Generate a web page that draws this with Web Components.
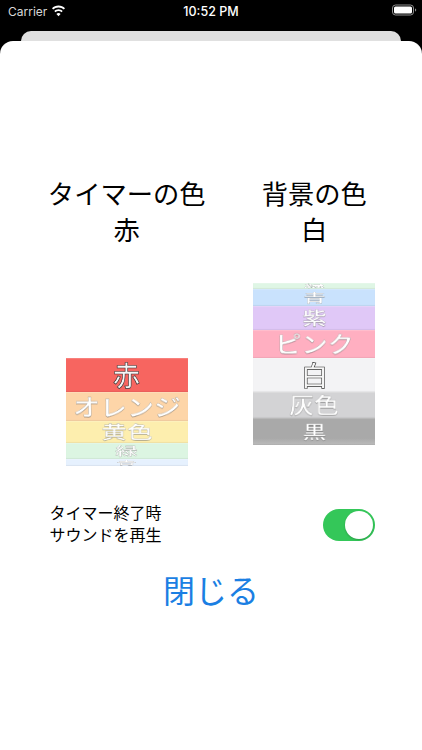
<!DOCTYPE html>
<html lang="ja">
<head>
<meta charset="utf-8">
<title>timer settings</title>
<style>
    html, body { margin: 0; height: 100%; background: #000; }
    body { font-family: "Noto Sans CJK JP", "Liberation Sans", sans-serif; overflow: hidden; }
</style>
</head>
<body>

<template id="status-bar-tpl">
    <style>
        :host { display: flex; align-items: center; height: 22px; padding: 0 5px 0 8px; color: #fff; font: 12.5px "Inter", "Liberation Sans", sans-serif; }
        .left { display: flex; align-items: center; gap: 4px; flex: 1; color: #d8d8d8; font-size: 12px; }
        .time { flex: 1; text-align: center; font-weight: 500; margin-right: 3px; }
        .right { flex: 1; display: flex; justify-content: flex-end; }
        svg { display: block; }
        .right svg { margin-bottom: 2px; }
    </style>
    <div class="left">
        <span>Carrier</span>
        <svg width="15" height="12" viewBox="0 0 15 12"><path fill="#fff" d="M7.500 2.400c2 0 3.900.8 5.300 2.100l1.200-1.200C12.300 1.600 10 .6 7.500.6S2.700 1.600 1 3.300l1.200 1.200C3.600 3.200 5.500 2.400 7.500 2.400zM7.500 6c1.100 0 2.200.4 3 1.200l1.200-1.200C10.600 4.900 9.100 4.200 7.500 4.200S4.400 4.900 3.300 6l1.200 1.200c.8-.8 1.900-1.200 3-1.200zM7.500 11.200l2.100-2.300c-.5-.6-1.300-.9-2.100-.9s-1.600.3-2.100.9z"/></svg>
    </div>
    <div class="time">10:52 PM</div>
    <div class="right">
        <svg width="25" height="12" viewBox="0 0 25 12"><rect x=".5" y="1" width="21" height="10" rx="3" fill="none" stroke="#8e8e8e"/><rect x="2" y="2.500" width="18" height="7" rx="1.500" fill="#fff"/><path d="M23 4.500c.8.200 1.200.8 1.200 1.500s-.4 1.300-1.200 1.500z" fill="#8e8e8e"/></svg>
    </div>
</template>

<template id="sheet-stack-tpl">
    <style>
        :host { display: block; margin-top: 9px; }
        .back { height: 20px; margin: 0 21px -10px; background: #e0e0e0; border-radius: 10px 10px 0 0; }
        .front { height: 709px; background: #fff; border-radius: 13px 13px 0 0; box-sizing: border-box; padding-top: 134px; }
    </style>
    <div class="back"></div>
    <div class="front"><slot></slot></div>
</template>

<template id="color-column-tpl">
    <style>
        :host { display: flex; flex-direction: column; align-items: center; width: 188px; color: #000; }
        .title { font-size: 26.3px; line-height: 36px; text-align: center; white-space: nowrap; }
        .pick { width: 122px; height: 183px; margin-top: 36px; display: flex; flex-direction: column; }
    </style>
    <div class="title"><slot name="title"></slot></div>
    <div class="title"><slot name="value"></slot></div>
    <div class="pick"><div id="gap"></div><slot></slot></div>
</template>

<template id="color-row-tpl">
    <style>
        :host { display: flex; align-items: center; justify-content: center; flex: none; overflow: hidden; width: 122px; color: #fff; font: 500 27px/1.1 "Liberation Sans", "Noto Sans CJK JP", sans-serif; white-space: nowrap; box-shadow: inset 0 1px 1px rgba(255,255,255,.2), inset 0 -1px 1px rgba(0,0,0,.06); }
        span { display: block; will-change: transform; -webkit-text-stroke: .3px rgba(110,110,110,.6); text-shadow: 0 .5px .5px rgba(90,90,90,.35); }
        :host([picked]) span { color: #f6f6f6; -webkit-text-stroke: .6px rgba(40,40,40,.95); text-shadow: none; }
    </style>
    <span id="txt"><slot></slot></span>
</template>

<template id="sound-toggle-tpl">
    <style>
        :host { display: flex; align-items: center; justify-content: space-between; margin: 35px 47px 0 49.5px; color: #000; font-size: 16px; line-height: 22px; }
        .label { margin-bottom: 4px; }
        .track { position: relative; width: 52px; height: 32px; border-radius: 16px; background: #34c759; }
        .knob { position: absolute; top: 2px; right: 2px; width: 28px; height: 28px; border-radius: 50%; background: #fff; box-shadow: 0 1px 2px rgba(0,0,0,.2); }
    </style>
    <div class="label"><slot></slot></div>
    <div class="track"><div class="knob"></div></div>
</template>

<template id="close-button-tpl">
    <style>
        :host { display: block; margin-top: 18px; text-align: center; color: #1b7fe3; font-size: 32px; line-height: 44px; }
    </style>
    <slot></slot>
</template>

<script>
    (function() {
        // Most elements here only clone their template.
        function plain(name, tplId) {
            class Plain extends HTMLElement {
                constructor() {
                    super();
                    const root = this.attachShadow({mode: 'open'});
                    root.appendChild(document.getElementById(tplId).content.cloneNode(true));
                }
            }
            customElements.define(name, Plain);
        }

        plain('status-bar', 'status-bar-tpl');
        plain('sheet-stack', 'sheet-stack-tpl');
        plain('sound-toggle', 'sound-toggle-tpl');
        plain('close-button', 'close-button-tpl');

        class ColorColumn extends HTMLElement {
            constructor() {
                super();
                const root = this.attachShadow({mode: 'open'});
                root.appendChild(document.getElementById('color-column-tpl').content.cloneNode(true));
            }
            connectedCallback() {
                this.shadowRoot.getElementById('gap').style.height = (this.getAttribute('gap') || 0) + 'px';
            }
        }
        customElements.define('color-column', ColorColumn);

        // A row of the wheel: sy squashes the label the way the cylinder does.
        class ColorRow extends HTMLElement {
            constructor() {
                super();
                const root = this.attachShadow({mode: 'open'});
                root.appendChild(document.getElementById('color-row-tpl').content.cloneNode(true));
            }
            connectedCallback() {
                this.style.height = this.getAttribute('h') + 'px';
                this.style.background = this.getAttribute('bg');
                const sx = this.getAttribute('sx') || 1;
                const sy = this.getAttribute('sy') || 1;
                this.shadowRoot.getElementById('txt').style.transform = 'translateY(' + (2.5 * sy) + 'px) scale(' + sx + ',' + sy + ')';
            }
        }
        customElements.define('color-row', ColorRow);
    })();
</script>

<status-bar></status-bar>
<sheet-stack>
    <div style="display:flex;justify-content:space-between;padding:0 14px 0 33px;">
        <color-column gap="75">
            <span slot="title">タイマーの色</span>
            <span slot="value">赤</span>
            <color-row h="34" sy="1" bg="#f76560" picked>赤</color-row>
            <color-row h="29" sy=".86" bg="#fdd5a8">オレンジ</color-row>
            <color-row h="22" sy=".66" sx=".95" bg="#fdeeae">黄色</color-row>
            <color-row h="16" sy=".45" sx=".85" bg="#dcf5e2">緑</color-row>
            <color-row h="7" sy=".2" sx=".75" bg="#e6f1fe">青</color-row>
        </color-column>
        <color-column gap="0">
            <span slot="title">背景の色</span>
            <span slot="value">白</span>
            <color-row h="6" sy=".18" sx=".75" bg="#dff6e5">緑</color-row>
            <color-row h="17" sy=".45" sx=".85" bg="#c9e2fd">青</color-row>
            <color-row h="24" sy=".66" sx=".9" bg="#e0c8f7">紫</color-row>
            <color-row h="28" sy=".84" sx=".97" bg="#ffafc1">ピンク</color-row>
            <color-row h="34" sy="1" bg="#f3f3f5" picked>白</color-row>
            <color-row h="26" sy=".82" sx=".92" bg="#d3d3d5">灰色</color-row>
            <color-row h="27" sy=".66" sx=".88" bg="linear-gradient(#a9a9a9 75%, #bcbcbc)">黒</color-row>
        </color-column>
    </div>
    <sound-toggle>タイマー終了時<br>サウンドを再生</sound-toggle>
    <close-button>閉じる</close-button>
</sheet-stack>

</body>
</html>
